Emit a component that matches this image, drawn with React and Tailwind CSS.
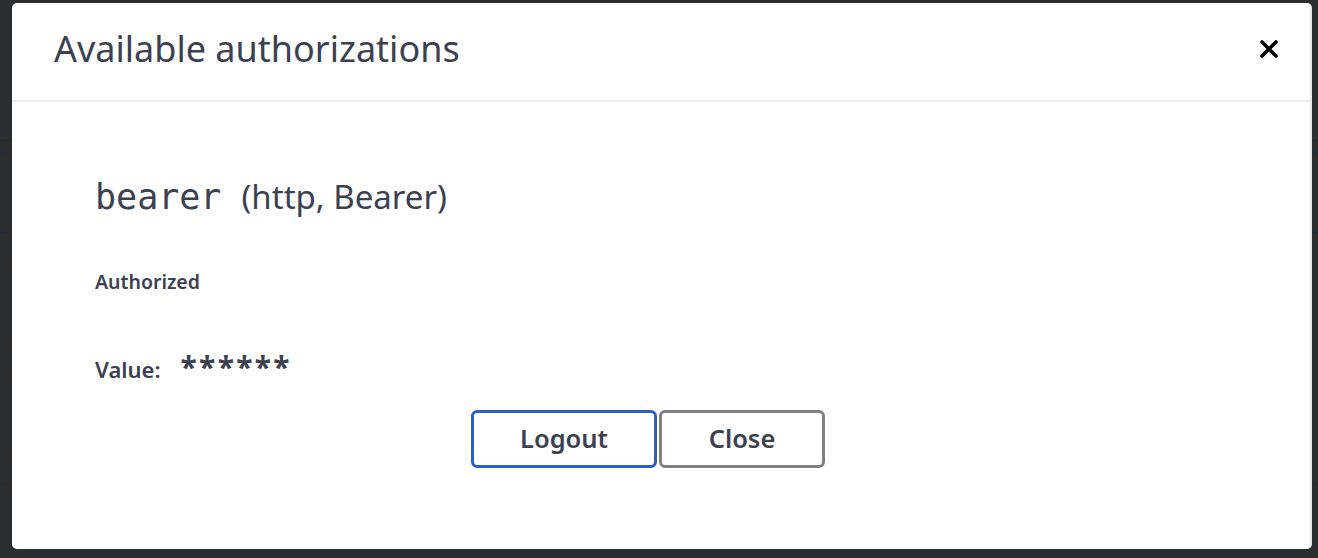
import React from 'react';

const sans = { fontFamily: '"Noto Sans", "Noto Sans CJK KR", sans-serif' };

// faint rows of the page under the dark overlay
const rows = [
  { h: 'h-[140px]', c: 'border-[#232426]' },
  { h: 'h-[12px]', c: 'border-[#1f2c40]' },
  { h: 'h-[78px]', c: 'border-[#1f2c40]' },
  { h: 'h-[33px]', c: 'border-[#1e3326]' },
  { h: 'h-[79px]', c: 'border-[#1e3326]' },
  { h: 'h-[32px]', c: 'border-[#1e3326]' },
  { h: 'h-[79px]', c: 'border-[#1e3326]' },
  { h: 'h-[23px]', c: 'border-[#1f2c40]' },
];

const Backdrop = () => (
  <div className="flex flex-col">
    {rows.map((r, i) => (
      <div key={i} className={`${r.h} border-b ${r.c} box-content`} />
    ))}
  </div>
);

export default function App() {
  return (
    <div className="relative w-[1318px] h-[558px] overflow-hidden bg-[#2c2d2f] text-[#3b4151]" style={sans}>
      <Backdrop />
      <div className="absolute left-[12px] top-[3px] w-[1300px] h-[546px] bg-white rounded-[5px] border-r-2 border-[#e8e8e8] flex flex-col">
        <div className="h-[99px] shrink-0 flex items-center justify-between border-b-2 border-[#ebebeb] pl-[42px] pr-[30px]">
          <h3 className="text-[36px] font-normal leading-none text-[#3b4151] -mt-[6px]">
            Available authorizations
          </h3>
          <button className="w-[22px] h-[22px] flex items-center justify-center -mt-[5px]">
            <svg viewBox="0 0 20 20" className="w-[20px] h-[20px]">
              <path d="M3 3 L17 17 M17 3 L3 17" stroke="#000" strokeWidth="3.6" strokeLinecap="round" />
            </svg>
          </button>
        </div>
        <div className="flex flex-col pl-[83px] pt-[78px]">
          <h4 className="flex items-baseline leading-none">
            <span className="text-[35px] text-[#3b4151]" style={{ fontFamily: '"DejaVu Sans Mono", monospace' }}>
              bearer
            </span>
            <span className="ml-[20px] text-[33px]">(http, Bearer)</span>
          </h4>
          <div className="mt-[57px] text-[19.5px] font-semibold leading-none">Authorized</div>
          <div className="mt-[60px] flex items-baseline leading-none">
            <span className="text-[22px] font-semibold">Value:</span>
            <span className="ml-[20px] text-[30px] font-bold tracking-[2.3px]">******</span>
          </div>
          <div className="mt-[28px] flex justify-center gap-[2px] pr-[107px] -ml-[2px]">
            <button className="w-[186px] h-[58px] rounded-[6px] border-[3px] border-[#2d5fc8] text-[25.5px] font-semibold leading-none">
              Logout
            </button>
            <button className="w-[166px] h-[58px] rounded-[6px] border-[3px] border-[#808080] text-[25.5px] font-semibold leading-none">
              Close
            </button>
          </div>
        </div>
      </div>
    </div>
  );
}
